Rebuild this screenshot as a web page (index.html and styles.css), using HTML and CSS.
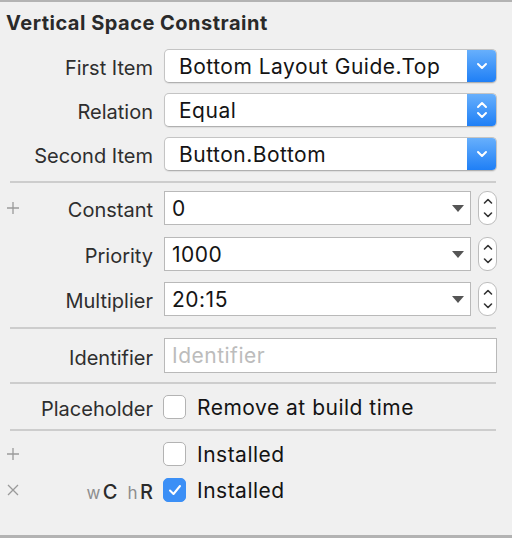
FILE: index.html
```html
<!DOCTYPE html>
<html>
<head>
<meta charset="utf-8">
<link rel="stylesheet" href="styles.css">
</head>
<body>
<div class="panel">
  <div class="title">Vertical Space Constraint</div>

  <div class="row r-first">
    <span class="icon"></span><span class="label">First Item</span>
    <div class="popup"><span class="ptext">Bottom Layout Guide.Top</span>
      <span class="pblue"><svg width="14" height="10" viewBox="0 0 14 10"><path d="M3 3 L7 7 L11 3" fill="none" stroke="#fff" stroke-width="2" stroke-linecap="round" stroke-linejoin="round"/></svg></span></div>
  </div>
  <div class="row r-gap">
    <span class="icon"></span><span class="label">Relation</span>
    <div class="popup"><span class="ptext">Equal</span>
      <span class="pblue"><svg width="14" height="22" viewBox="0 0 14 22"><path d="M3 8 L7 4 L11 8" fill="none" stroke="#fff" stroke-width="2" stroke-linecap="round" stroke-linejoin="round"/><path d="M3 14 L7 18 L11 14" fill="none" stroke="#fff" stroke-width="2" stroke-linecap="round" stroke-linejoin="round"/></svg></span></div>
  </div>
  <div class="row r-gap">
    <span class="icon"></span><span class="label">Second Item</span>
    <div class="popup"><span class="ptext">Button.Bottom</span>
      <span class="pblue"><svg width="14" height="10" viewBox="0 0 14 10"><path d="M3 3 L7 7 L11 3" fill="none" stroke="#fff" stroke-width="2" stroke-linecap="round" stroke-linejoin="round"/></svg></span></div>
  </div>

  <div class="sep s1"></div>

  <div class="row r-const">
    <span class="icon"><svg width="14" height="14" viewBox="0 0 14 14"><path d="M7 1 V13 M1 7 H13" stroke="#9a9a9a" stroke-width="1.3"/></svg></span><span class="label">Constant</span>
    <div class="combo"><span class="ctext">0</span><span class="tri"></span></div>
    <div class="stepper"><svg width="12" height="26" viewBox="0 0 12 26"><path d="M2.5 8 L6 4.5 L9.5 8" fill="none" stroke="#333" stroke-width="1.6" stroke-linecap="round" stroke-linejoin="round"/><path d="M2.5 18 L6 21.5 L9.5 18" fill="none" stroke="#333" stroke-width="1.6" stroke-linecap="round" stroke-linejoin="round"/></svg></div>
  </div>
  <div class="row r-gap2">
    <span class="icon"></span><span class="label">Priority</span>
    <div class="combo"><span class="ctext">1000</span><span class="tri"></span></div>
    <div class="stepper"><svg width="12" height="26" viewBox="0 0 12 26"><path d="M2.5 8 L6 4.5 L9.5 8" fill="none" stroke="#333" stroke-width="1.6" stroke-linecap="round" stroke-linejoin="round"/><path d="M2.5 18 L6 21.5 L9.5 18" fill="none" stroke="#333" stroke-width="1.6" stroke-linecap="round" stroke-linejoin="round"/></svg></div>
  </div>
  <div class="row r-gap3">
    <span class="icon"></span><span class="label">Multiplier</span>
    <div class="combo"><span class="ctext">20:15</span><span class="tri"></span></div>
    <div class="stepper"><svg width="12" height="26" viewBox="0 0 12 26"><path d="M2.5 8 L6 4.5 L9.5 8" fill="none" stroke="#333" stroke-width="1.6" stroke-linecap="round" stroke-linejoin="round"/><path d="M2.5 18 L6 21.5 L9.5 18" fill="none" stroke="#333" stroke-width="1.6" stroke-linecap="round" stroke-linejoin="round"/></svg></div>
  </div>

  <div class="sep s2"></div>

  <div class="row r-ident">
    <span class="icon"></span><span class="label">Identifier</span>
    <div class="textfield"><span class="placeholder">Identifier</span></div>
  </div>

  <div class="sep s3"></div>

  <div class="row r-place">
    <span class="icon"></span><span class="label">Placeholder</span>
    <span class="check"></span><span class="cbtext">Remove at build time</span>
  </div>

  <div class="sep s4"></div>

  <div class="row r-inst1">
    <span class="icon"><svg width="14" height="14" viewBox="0 0 14 14"><path d="M7 1 V13 M1 7 H13" stroke="#9a9a9a" stroke-width="1.3"/></svg></span><span class="label"></span>
    <span class="check"></span><span class="cbtext">Installed</span>
  </div>
  <div class="row r-inst2">
    <span class="icon"><svg width="14" height="14" viewBox="0 0 14 14"><path d="M2 2 L12 12 M12 2 L2 12" stroke="#9a9a9a" stroke-width="1.3"/></svg></span><span class="label sizes"><span class="sc">w</span><span class="bc">C</span><span class="sc sh">h</span><span class="bc">R</span></span>
    <span class="check on"><svg width="16" height="14" viewBox="0 0 16 14"><path d="M3 7.5 L6.5 11 L13 3" fill="none" stroke="#fff" stroke-width="2" stroke-linecap="round" stroke-linejoin="round"/></svg></span><span class="cbtext">Installed</span>
  </div>
</div>
</body>
</html>
```

FILE: styles.css
```css
html, body {
  margin: 0;
  padding: 0;
  background: #f0f0f0;
}
body {
  font-family: "Inter", "Liberation Sans", sans-serif;
  color: #2b2b2b;
}
.panel {
  width: 512px;
  height: 533px;
  border-top: 2px solid #b3b3b3;
  border-bottom: 3px solid #b3b3b3;
  background: #f0f0f0;
}
.title {
  font-weight: 700;
  font-size: 20px;
  line-height: 22px;
  margin: 10px 0 0 6px;
  color: #2a2a2a;
  letter-spacing: 0.5px;
}
.row {
  display: flex;
  align-items: center;
  height: 34px;
}
.r-first { margin-top: 15px; }
.r-gap { margin-top: 10px; }
.r-const { margin-top: 8px; }
.r-gap2 { margin-top: 12px; }
.r-gap3 { margin-top: 11px; }
.r-ident { margin-top: 9px; height: 35px; }
.r-place { margin-top: 6px; }
.r-inst1 { margin-top: 6px; }
.r-inst2 { margin-top: 2px; }

.icon {
  width: 30px;
  padding-left: 6px;
  box-sizing: border-box;
  display: flex;
  align-items: center;
}
.label {
  width: 123px;
  margin-right: 11px;
  padding-top: 4px;
  text-align: right;
  font-size: 20px;
  color: #2e2e2e;
  white-space: nowrap;
}
.popup {
  width: 333px;
  height: 34px;
  box-sizing: border-box;
  background: #fff;
  border: 1px solid #c4c4c4;
  border-bottom-color: #b0b0b0;
  border-radius: 5px;
  display: flex;
  align-items: center;
  overflow: hidden;
  box-shadow: 0 1px 1px rgba(0,0,0,0.08);
}
.ptext {
  flex: 1;
  padding-left: 14px;
  font-size: 21px;
  letter-spacing: 0.5px;
  color: #141414;
  white-space: nowrap;
}
.pblue {
  width: 29px;
  height: 100%;
  background: linear-gradient(#67affc, #1f7ff6);
  display: flex;
  align-items: center;
  justify-content: center;
}
.combo {
  width: 307px;
  height: 34px;
  box-sizing: border-box;
  background: #fff;
  border: 1px solid #b9b9b9;
  display: flex;
  align-items: center;
}
.ctext {
  flex: 1;
  padding-left: 7px;
  font-size: 21px;
  letter-spacing: 0.5px;
  color: #141414;
}
.tri {
  width: 0;
  height: 0;
  border-left: 6px solid transparent;
  border-right: 6px solid transparent;
  border-top: 7px solid #555;
  margin-right: 6px;
}
.stepper {
  margin-left: 7px;
  width: 19px;
  height: 34px;
  box-sizing: border-box;
  background: #fff;
  border: 1px solid #bdbdbd;
  border-radius: 9px;
  display: flex;
  align-items: center;
  justify-content: center;
}
.textfield {
  width: 333px;
  height: 35px;
  box-sizing: border-box;
  background: #fff;
  border: 1px solid #b9b9b9;
  display: flex;
  align-items: center;
}
.placeholder {
  padding-left: 7px;
  font-size: 21px;
  letter-spacing: 0.5px;
  color: #bcbcbc;
}
.sep {
  height: 2px;
  margin-left: 10px;
  width: 486px;
  background: #cdcdcd;
}
.s1 { margin-top: 10px; }
.s2 { margin-top: 11px; }
.s3 { margin-top: 9px; }
.s4 { margin-top: 5px; }

.check {
  width: 23px;
  height: 24px;
  box-sizing: border-box;
  border: 1px solid #b3b3b3;
  border-radius: 5px;
  background: #fff;
  display: flex;
  align-items: center;
  justify-content: center;
  margin-left: -1px;
}
.check.on {
  background: #3b8ff6;
  border-color: #3b8ff6;
}
.cbtext {
  margin-left: 11px;
  font-size: 21px;
  letter-spacing: 0.5px;
  color: #141414;
}
.sizes {
  display: flex;
  justify-content: flex-end;
  align-items: baseline;
}
.sc {
  font-size: 17px;
  color: #8d8d8d;
  margin-right: 2px;
  letter-spacing: 0.5px;
}
.sh { margin-left: 10px; }
.bc {
  font-size: 20px;
  font-weight: 500;
  color: #2b2b2b;
}
```
